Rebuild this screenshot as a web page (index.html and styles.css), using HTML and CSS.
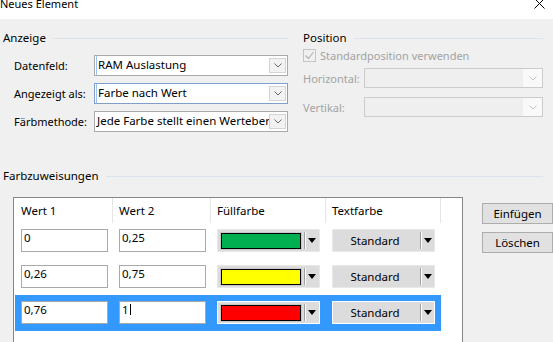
FILE: index.html
```html
<!DOCTYPE html>
<html>
<head>
<meta charset="utf-8"/>
<title>Neues Element</title>
<link rel="stylesheet" href="styles.css">
</head>
<body>
<div class="window">
    <div class="titlebar">
        <span class="title">Neues Element</span>
        <svg class="close" width="11" height="11" viewBox="0 0 11 11"><path d="M0.5 0.5 L10.5 10.5 M10.5 0.5 L0.5 10.5" stroke="#000" stroke-width="1" fill="none"/></svg>
    </div>
    <div class="content">
        <div class="top">
            <section class="group anzeige">
                <div class="group-head">Anzeige</div>
                <div class="form">
                    <label>Datenfeld:</label>
                    <div class="combo"><span class="value caret-edge">RAM Auslastung</span><span class="drop"><svg width="8" height="5" viewBox="0 0 8 5"><path d="M0.5 0.5 L4 4 L7.5 0.5" stroke="#666" fill="none"/></svg></span></div>
                    <label>Angezeigt als:</label>
                    <div class="combo focused"><span class="value caret-edge">Farbe nach Wert</span><span class="drop"><svg width="8" height="5" viewBox="0 0 8 5"><path d="M0.5 0.5 L4 4 L7.5 0.5" stroke="#666" fill="none"/></svg></span></div>
                    <label>Färbmethode:</label>
                    <div class="combo"><span class="value">Jede Farbe stellt einen Wertebereich dar</span><span class="drop"><svg width="8" height="5" viewBox="0 0 8 5"><path d="M0.5 0.5 L4 4 L7.5 0.5" stroke="#666" fill="none"/></svg></span></div>
                </div>
            </section>
            <section class="group position">
                <div class="group-head">Position</div>
                <div class="check-row">
                    <span class="checkbox"><svg width="11" height="11" viewBox="0 0 11 11"><path d="M1.5 5.5 L4.5 8.5 L9.5 2" stroke="#b4b4b4" stroke-width="1.2" fill="none"/></svg></span>
                    <span class="disabled-text">Standardposition verwenden</span>
                </div>
                <div class="pos-form">
                    <label class="disabled-text">Horizontal:</label>
                    <div class="combo disabled"><span class="value"></span><span class="drop"><svg width="8" height="5" viewBox="0 0 8 5"><path d="M0.5 0.5 L4 4 L7.5 0.5" stroke="#c4c4c4" fill="none"/></svg></span></div>
                    <label class="disabled-text">Vertikal:</label>
                    <div class="combo disabled"><span class="value"></span><span class="drop"><svg width="8" height="5" viewBox="0 0 8 5"><path d="M0.5 0.5 L4 4 L7.5 0.5" stroke="#c4c4c4" fill="none"/></svg></span></div>
                </div>
            </section>
        </div>

        <section class="group colors">
            <div class="group-head">Farbzuweisungen</div>
            <div class="colors-body">
                <div class="list-box">
                    <div class="list-row list-header">
                        <div class="cell">Wert 1</div>
                        <div class="cell">Wert 2</div>
                        <div class="cell">Füllfarbe</div>
                        <div class="cell">Textfarbe</div>
                    </div>
                    <div class="list-row">
                        <div class="cell"><span class="text-input">0</span></div>
                        <div class="cell"><span class="text-input">0,25</span></div>
                        <div class="cell"><span class="picker"><span class="swatch green"></span><span class="arrow"></span></span></div>
                        <div class="cell"><span class="picker text-picker"><span class="picker-label">Standard</span><span class="arrow"></span></span></div>
                    </div>
                    <div class="list-row">
                        <div class="cell"><span class="text-input">0,26</span></div>
                        <div class="cell"><span class="text-input">0,75</span></div>
                        <div class="cell"><span class="picker"><span class="swatch yellow"></span><span class="arrow"></span></span></div>
                        <div class="cell"><span class="picker text-picker"><span class="picker-label">Standard</span><span class="arrow"></span></span></div>
                    </div>
                    <div class="list-row selected">
                        <div class="cell"><span class="text-input">0,76</span></div>
                        <div class="cell"><span class="text-input">1<span class="caret"></span></span></div>
                        <div class="cell"><span class="picker"><span class="swatch red"></span><span class="arrow"></span></span></div>
                        <div class="cell"><span class="picker text-picker"><span class="picker-label">Standard</span><span class="arrow"></span></span></div>
                    </div>
                </div>
                <div class="side-buttons">
                    <button class="btn">Einfügen</button>
                    <button class="btn">Löschen</button>
                </div>
            </div>
        </section>
    </div>
</div>
</body>
</html>
```

FILE: styles.css
```css
* {
    box-sizing: border-box;
}
body {
    margin: 0;
    padding: 0;
    font-family: "Noto Sans", "Open Sans", sans-serif;
    font-size: 11px;
    color: #000;
    background: #f0f0f0;
}
.window {
    width: 553px;
    height: 342px;
    overflow: hidden;
    background: #f0f0f0;
}
.titlebar {
    height: 19px;
    background: #fff;
    display: flex;
    justify-content: space-between;
    overflow: hidden;
}
.title {
    margin-top: -4px;
    line-height: 15px;
}
.close {
    margin: -2px 8px 0 0;
}
.content {
    padding: 11px 0 0 3px;
}
.top {
    display: flex;
    gap: 15px;
}
.group-head {
    display: flex;
    align-items: center;
    height: 16px;
    line-height: 16px;
    font-size: 11.5px;
}
.group-head::after {
    content: "";
    flex: 1;
    height: 1px;
    background: #dde3ea;
    margin-left: 7px;
}
.anzeige {
    width: 285px;
}
.position {
    width: 240px;
}
.form {
    display: grid;
    grid-template-columns: 80px 194px;
    grid-auto-rows: 21px;
    row-gap: 7px;
    margin-top: 9px;
    padding-left: 11px;
    align-items: center;
}
.combo {
    display: flex;
    height: 21px;
    border: 1px solid #a9a9a9;
    background: #fff;
    overflow: hidden;
    font-size: 11.5px;
}
.combo.focused {
    border-color: #7fa0cc;
}
.combo .value {
    flex: 1;
    padding-left: 2px;
    line-height: 18px;
    white-space: nowrap;
    overflow: hidden;
}
.combo .caret-edge {
    border-left: 1px solid #9cc3f0;
    margin-left: 1px;
    padding-left: 1px;
}
.combo .drop {
    width: 17px;
    margin: 2px 1px 2px 0;
    border: 1px solid #d4d4d4;
    background: #f2f2f2;
    display: flex;
    align-items: center;
    justify-content: center;
}
.combo.disabled {
    height: 20px;
    border-color: #cccccc;
    background: #efefef;
}
.combo.disabled .drop {
    margin: 0;
    border: none;
    background: #f9f9f9;
    width: 19px;
}
.check-row {
    display: flex;
    align-items: center;
    gap: 4px;
    height: 15px;
    margin-top: 2px;
}
.checkbox {
    width: 13px;
    height: 13px;
    border: 1px solid #c4c4c4;
    background: #f0f0f0;
    display: flex;
    align-items: center;
    justify-content: center;
}
.disabled-text {
    color: #a3a3a3;
}
.pos-form {
    display: grid;
    grid-template-columns: 61px 179px;
    grid-auto-rows: 20px;
    row-gap: 9px;
    margin-top: 5px;
    align-items: center;
}
.colors {
    margin-top: 36px;
}
.colors .group-head {
    margin-right: 10px;
}
.colors-body {
    display: flex;
    align-items: flex-start;
    gap: 19px;
    margin-top: 13px;
    padding-left: 10px;
}
.list-box {
    width: 450px;
    height: 170px;
    flex-shrink: 0;
    border: 1px solid #868686;
    background: #fff;
    padding-left: 1px;
}
.list-row {
    display: grid;
    grid-template-columns: 98px 98px 115px 115px;
    width: 426px;
    height: 36px;
}
.list-header {
    height: 25px;
    line-height: 25px;
    font-size: 11.5px;
}
.list-header .cell {
    border-right: 1px solid #e5e5e5;
}
.cell {
    padding: 6px 0 0 6px;
}
.list-header .cell {
    padding-top: 0;
}
.list-row.selected {
    background: #3399ff;
}
.text-input {
    display: block;
    width: 87px;
    height: 23px;
    border: 1px solid #a9a9a9;
    background: #fff;
    padding-left: 2px;
    line-height: 15px;
    font-size: 11.5px;
}
.caret {
    display: inline-block;
    width: 1px;
    height: 11px;
    background: #000;
    margin-left: 1px;
    vertical-align: -1px;
}
.picker {
    display: flex;
    align-items: center;
    width: 103px;
    height: 23px;
    border: 1px solid #e8e8e8;
    background: #dcdcdc;
    padding: 0 3px;
}
.selected .picker {
    border-color: #fff;
}
.swatch {
    width: 83px;
    height: 16px;
    border: 1px solid #000;
    box-shadow: 0 0 0 1px #c8c8c8;
}
.swatch.green { background: #00b050; }
.swatch.yellow { background: #ffff00; }
.swatch.red { background: #ff0000; }
.arrow {
    margin-left: 4px;
    height: 17px;
    width: 11px;
    border-left: 1px solid #fff;
    box-shadow: -1px 0 0 #a0a0a0;
    display: flex;
    align-items: center;
    justify-content: flex-end;
}
.arrow::after {
    content: "";
    border-left: 4px solid transparent;
    border-right: 4px solid transparent;
    border-top: 5px solid #000;
}
.text-picker {
    padding: 0 2px 0 0;
}
.picker-label {
    flex: 1;
    text-align: center;
    font-size: 11.5px;
}
.side-buttons {
    display: flex;
    flex-direction: column;
    gap: 8px;
    margin-top: 6px;
}
.btn {
    width: 71px;
    height: 21px;
    flex-shrink: 0;
    border: 1px solid #adadad;
    background: #e1e1e1;
    font-family: inherit;
    font-size: 11.5px;
    padding: 0;
    color: #000;
}
```
